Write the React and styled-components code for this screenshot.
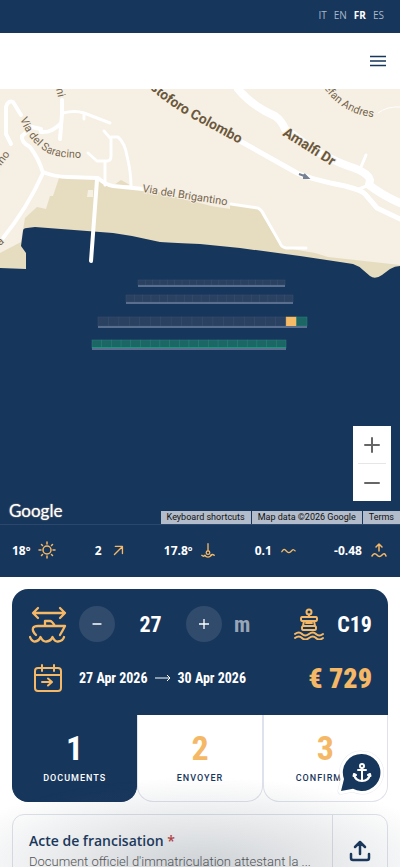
import React, { useState } from 'react';
import styled, { createGlobalStyle, css } from 'styled-components';

const GlobalStyle = createGlobalStyle`
  :root {
    --navy: #17365c;
    --sand: #f4b866;
    --line: #dfe2ea;
    --text: "Open Sans", "Noto Sans", sans-serif;
    --narrow: "Liberation Sans Narrow", "Roboto Condensed", "Liberation Sans", sans-serif;
  }
  * { box-sizing: border-box; }
  body {
    margin: 0;
    background: #fff;
    color: var(--navy);
    font-family: var(--text);
  }
  button { font: inherit; color: inherit; border: 0; padding: 0; cursor: pointer; }
`;

const piers = [
  { x: 138, y: 191, width: 147, height: 7, cells: 20 },
  { x: 126, y: 206, width: 167, height: 9, cells: 20 },
  { x: 98, y: 228, width: 209, height: 11, cells: 20, selected: 18, free: 19 },
  { x: 92, y: 251, width: 194, height: 10, cells: 20, allFree: true },
];

function Pier({ x, y, width, height, cells, selected, free, allFree }) {
  const step = width / cells;
  const fill = (i) => {
    if (i === selected) return '#f5bb66';
    if (allFree || i === free) return '#1c6666';
    return '#2a4162';
  };
  const edge = (i) => {
    if (i === selected) return '#f5bb66';
    if (allFree || i === free) return '#2a8577';
    return '#3a506e';
  };
  return (
    <g>
      {Array.from({ length: cells }, (_, i) => (
        <rect
          key={i}
          x={x + i * step}
          y={y}
          width={step}
          height={height - 2}
          fill={fill(i)}
          stroke={edge(i)}
          strokeWidth="0.5"
        />
      ))}
      <rect x={x} y={y + height - 2} width={width} height="2" fill="#5a6f90" />
      {allFree && <rect x={x} y={y + height - 3} width={width} height="1" fill="#1f947c" />}
    </g>
  );
}

function PortMap() {
  return (
    <MapSvg viewBox="0 0 400 435" preserveAspectRatio="xMidYMin slice" role="img" aria-label="Marina map">
      <defs>
        <path id="saracino" d="M20 30 C26 45 35 57 48 64 C58 69 72 69 104 69" />
        <path id="colombo" d="M147 -3 C161 10 175 20 195 31 L260 66" />
        <path id="andres" d="M324 -1 C333 12 345 21 361 26 L400 33" />
      </defs>
      <rect width="400" height="435" fill="#f5efe4" />
      <path
        fill="#e6dcc0"
        d="M0 164 L21 153 25 129 37 118 46 120 50 107 53 107 59 89 97 90 107 97 143 99 211 117 230 114 257 118 282 158 303 162 315 164 328 168 400 176 V210 H0Z"
      />
      <path fill="#e6dcc0" d="M114 96 L121 91 130 96Z" />
      <path fill="#f5efe4" d="M88 101 h5 v7 h-6Z M211 114 h19 v6 l-19 -3Z" />
      <path
        fill="#17365c"
        d="M0 179 L26 180 V164 L21 157 23 142 Q23 139 27 139 L35 138 113 144 132 147 160 153 Q175 154 200 155 L240 159 300 167 340 173 353 175 Q359 177 363 181 L370 187 Q375 191 382 186 L390 180 Q395 177 400 177 V435 H0Z"
      />
      <g fill="none" stroke="#fff" strokeWidth="4" strokeLinecap="round" strokeLinejoin="round">
        <path d="M11 55 L6 45 V18 Q8 11 13 13 L21 26" />
        <path d="M62 11 V25 L60 50 M61 34 Q52 44 41 43 L41 40 32 38 22 47 Q21 53 30 58 Q39 70 43 84 Q35 102 25 118 T3 149" />
        <path d="M43 83 Q55 88 68 88 L98 89 Q106 96 113 97 L143 100" />
        <path d="M97 91 L91 172" />
        <path d="M105 96 V73 M88 64 L97 72 H107 Q111 72 111 67 V50 L104 42" strokeWidth="3" />
        <path d="M111 48 H118 Q125 54 127 67 Q131 83 131 97" strokeWidth="3" />
        <path d="M63 24 Q75 21 84 24 L110 34 M84 24 V30" strokeWidth="3" />
        <path d="M231 115 L258 119 Q262 121 264 126 L280 154 Q281 158 286 159 L306 159" strokeWidth="3" />
        <path d="M240 52 L297 84 Q310 90 345 97 Q361 101 365 105 L377 119 400 130" strokeWidth="5" />
        <path d="M238 0 Q252 17 275 27 Q282 32 285 40 L312 60 Q340 75 354 79 Q368 84 370 91 L369 96 Q382 106 400 114" strokeWidth="8" />
        <path d="M366 66 L361 78 M359 100 L369 96" strokeWidth="3" />
        <path d="M378 24 Q387 17 400 18" strokeWidth="1" />
      </g>
      <path d="M299 85 L307 88 M304 85 l4 4 l-5 0" fill="#758293" stroke="#758293" strokeWidth="2" />
      <MapLabel><textPath href="#saracino">Via del Saracino</textPath></MapLabel>
      <MapLabel $bold><textPath href="#colombo">istoforo Colombo</textPath></MapLabel>
      <MapLabel><textPath href="#andres">efan Andres</textPath></MapLabel>
      <MapLabel transform="translate(142 103) rotate(9)">Via del Brigantino</MapLabel>
      <MapLabel $bold transform="translate(282 46) rotate(32)">Amalfi Dr</MapLabel>
      <MapLabel transform="translate(-3 82) rotate(-52)">pino</MapLabel>
      <MapLabel transform="translate(56 0) rotate(76)">ni</MapLabel>
      <MapLabel transform="translate(0 157) rotate(-40)">a</MapLabel>
      {piers.map((p) => <Pier key={p.y} {...p} />)}
    </MapSvg>
  );
}

const Icon = ({ size = 20, box = 24, width = 1.5, children }) => (
  <Drawing width={size} height={size} viewBox={`0 0 ${box} ${box}`} strokeWidth={width} aria-hidden="true">
    {children}
  </Drawing>
);

const weather = [
  { value: '18º', label: 'Air', icon: <><circle cx="9" cy="9" r="4" /><path d="M9 1v2M9 15v2M1 9h2M15 9h2M3.5 3.5l1 1M13.5 13.5l1 1M3.5 14.5l1-1M13.5 4.5l1-1" /></> },
  { value: '2', label: 'Vent', icon: <path d="M5 14 L14 5 M6 5 H14 V13" />, size: 16 },
  { value: '17.8º', label: 'Eau', icon: <><path d="M9 2v8M2 15q2 2 4 0M12 15q2-2 4 0M5 15q4 4 8 0" /><circle cx="9" cy="12" r="2" /></>, size: 16 },
  { value: '0.1', label: 'Vagues', icon: <path d="M2 11q2-4 4-2l2 2q2 2 4 0l2-2q1-1 3 1" />, size: 16 },
  { value: '-0.48', label: 'Marée', icon: <><path d="M9 10V3M6 6l3-3 3 3M2 15q2.500-4 5-1t5 0 4 1" /></>, size: 18 },
];

const steps = [
  { id: 1, label: 'DOCUMENTS' },
  { id: 2, label: 'ENVOYER' },
  { id: 3, label: 'CONFIRMER' },
];

export default function App() {
  const [length, setLength] = useState(27);
  const [step, setStep] = useState(1);

  return (
    <>
      <GlobalStyle />
      <TopBar>
        {['IT', 'EN', 'FR', 'ES'].map((lang) => (
          <LangLink key={lang} href={`#${lang.toLowerCase()}`} $active={lang === 'FR'}>{lang}</LangLink>
        ))}
      </TopBar>
      <Header>
        <MenuButton aria-label="Menu">
          <svg width="16" height="12" viewBox="0 0 16 12" stroke="#17365c" strokeWidth="1.7" aria-hidden="true">
            <path d="M0 1.500h16M0 6h16M0 10.500h16" />
          </svg>
        </MenuButton>
      </Header>
      <main>
        <MapArea>
          <PortMap />
          <ZoomControl>
            <ZoomButton aria-label="Zoom in"><Icon size={16} box={16} width={2}><path d="M8 1v14M1 8h14" /></Icon></ZoomButton>
            <ZoomButton aria-label="Zoom out"><Icon size={16} box={16} width={2}><path d="M1 8h14" /></Icon></ZoomButton>
          </ZoomControl>
          <GoogleMark>Google</GoogleMark>
          <Credits>
            <CreditButton>Keyboard shortcuts</CreditButton>
            <Credit>Map data ©2026 Google</Credit>
            <Credit as="a" href="#terms">Terms</Credit>
          </Credits>
        </MapArea>
        <Weather>
          {weather.map((w) => (
            <WeatherItem key={w.label} title={w.label}>
              {w.value}
              <Icon size={w.size || 18} box={18}>{w.icon}</Icon>
            </WeatherItem>
          ))}
        </Weather>

        <Booking>
          <Summary>
            <SummaryRow>
              <IconCell>
                <Icon size={38} box={38} width={2.3}>
                  <path d="M5 8h31M9 3L4 8l5 5M31 3l5 5-5 5" />
                  <path d="M7 30Q3 26 4 23Q5 21 9 21H36Q34 25 31 30M16 21V16H21Q23 16 26 21" />
                  <path d="M1 32Q3 37 6 36.500Q10 36 11.500 32Q14 37 17.500 36.500Q22 36 23.500 32Q26 37 29 36.500Q34 36 35 32" />
                </Icon>
              </IconCell>
              <Stepper>
                <RoundButton aria-label="Moins" onClick={() => setLength(length - 1)}>
                  <Icon size={10} box={10} width={1.3}><path d="M1 5h8" /></Icon>
                </RoundButton>
                <Amount>{length}</Amount>
                <RoundButton aria-label="Plus" onClick={() => setLength(length + 1)}>
                  <Icon size={10} box={10} width={1.3}><path d="M5 0v10M0 5h10" /></Icon>
                </RoundButton>
                <Unit>m</Unit>
              </Stepper>
              <Berth>
                <Icon size={32} box={32} width={2}>
                  <circle cx="16" cy="4" r="2.5" />
                  <path d="M16 6.500V9M9 9H23Q24 9 24 11T23 13H9Q8 13 8 11T9 9ZM11 13L10 18M21 13L22 18M13 15h6M10 18H22Q23 18 23 20T22 22H10Q9 22 9 20T10 18Z" />
                  <path d="M2 26q4-3 7 0t7 0 7 0 7 0M2 30q4-3 7 0t7 0 7 0 7 0" />
                </Icon>
                C19
              </Berth>
            </SummaryRow>
            <SummaryRow>
              <IconCell>
                <Icon size={28} box={28} width={2}>
                  <rect x="1" y="4" width="26" height="23" rx="3" />
                  <path d="M1 11H27M8 1V7M20 1V7M8 18H17M14 14.500l4 3.500-4 3.500" />
                </Icon>
              </IconCell>
              <Dates>
                <time dateTime="2026-04-27">27 Apr 2026</time>
                <svg width="16" height="8" viewBox="0 0 16 8" fill="none" stroke="#fff" aria-hidden="true">
                  <path d="M0 4h15M12 1l3 3-3 3" />
                </svg>
                <time dateTime="2026-04-30">30 Apr 2026</time>
              </Dates>
              <Price>€ 729</Price>
            </SummaryRow>
          </Summary>
          <Steps>
            {steps.map((s) => (
              <StepButton key={s.id} $active={s.id === step} onClick={() => setStep(s.id)}>
                <StepNumber>{s.id}</StepNumber>
                <StepLabel>{s.label}</StepLabel>
              </StepButton>
            ))}
          </Steps>
        </Booking>

        <DocCard>
          <DocText>
            <DocTitle>Acte de francisation <Required>*</Required></DocTitle>
            <DocHint>Document officiel d'immatriculation attestant la ...</DocHint>
          </DocText>
          <UploadButton aria-label="Téléverser">
            <Icon size={22} box={22} width={2.5}>
              <path d="M11 14V2M6 7l5-5 5 5M2 14v4q0 2 2 2h14q2 0 2-2v-4" />
            </Icon>
          </UploadButton>
        </DocCard>
      </main>
      <Shade />
      <ChatButton aria-label="Contact">
        <svg width="48" height="46" viewBox="0 0 48 46" aria-hidden="true">
          <path
            d="M26 4a18.500 18.500 0 1 1-9 34.700L5 41l3-12A18.500 18.500 0 0 1 26 4Z"
            fill="#17365c" stroke="#e8eaf0" strokeWidth="7" strokeLinejoin="round" paintOrder="stroke"
          />
          <path
            d="M26 4a18.500 18.500 0 1 1-9 34.700L5 41l3-12A18.500 18.500 0 0 1 26 4Z"
            fill="#17365c" stroke="#fff" strokeWidth="6" strokeLinejoin="round" paintOrder="stroke"
          />
          <g fill="none" stroke="#fff" strokeWidth="2" strokeLinecap="round" strokeLinejoin="round">
            <circle cx="26" cy="16" r="2" />
            <path d="M26 18V31M22 20H30M18 24Q19 31 26 31T34 24M18 24l-.5 2M18 24l2 1M34 24l.5 2M34 24l-2 1" />
          </g>
        </svg>
      </ChatButton>
    </>
  );
}

const TopBar = styled.nav`
  display: flex;
  justify-content: flex-end;
  align-items: center;
  gap: 7px;
  height: 33px;
  padding: 0 16px 3px;
  background: var(--navy);
`;

const LangLink = styled.a`
  color: ${(p) => (p.$active ? '#fff' : '#a9b6c8')};
  font-size: 10px;
  font-weight: ${(p) => (p.$active ? 700 : 400)};
  text-decoration: none;
`;

const Header = styled.header`
  display: flex;
  justify-content: flex-end;
  align-items: center;
  height: 56px;
  padding: 0 14px;
  background: #fff;
`;

const MenuButton = styled.button`
  display: flex;
  background: none;
`;

const MapArea = styled.section`
  position: relative;
  height: 435px;
  background: var(--navy);
  font-family: Roboto, sans-serif;
  overflow: hidden;
`;

const MapSvg = styled.svg`
  display: block;
  width: 100%;
  height: 100%;
`;

const MapLabel = styled.text`
  fill: ${(p) => (p.$bold ? '#6b583c' : '#77664d')};
  stroke: #f5efe4;
  stroke-width: 2px;
  paint-order: stroke;
  font-size: ${(p) => (p.$bold ? 14 : 11)}px;
  font-weight: ${(p) => (p.$bold ? 700 : 400)};
`;

const ZoomControl = styled.div`
  position: absolute;
  right: 9px;
  bottom: 23px;
  width: 38px;
  padding: 0 5px;
  background: #fff;
`;

const ZoomButton = styled.button`
  display: flex;
  align-items: center;
  justify-content: center;
  width: 100%;
  height: 37px;
  background: none;
  color: #666;
  & + & {
    height: 38px;
    border-top: 1px solid #e6e6e6;
  }
`;

const GoogleMark = styled.span`
  position: absolute;
  left: 9px;
  bottom: 2px;
  color: #fff;
  font-family: Lato, sans-serif;
  font-size: 17px;
  line-height: 22px;
  text-shadow: 0 0 2px #555, 0 0 1px #fff;
`;

const Credits = styled.div`
  position: absolute;
  right: 0;
  bottom: 0;
  display: flex;
  gap: 1px;
`;

const creditStyle = css`
  padding: 0 6px;
  height: 13px;
  background: #b3bccb;
  color: #111;
  font-size: 9px;
  line-height: 13px;
  text-decoration: none;
  white-space: nowrap;
`;

const Credit = styled.span`
  ${creditStyle}
`;

const CreditButton = styled.button`
  ${creditStyle}
`;

const Drawing = styled.svg`
  flex: none;
  fill: none;
  stroke: currentColor;
  stroke-linecap: round;
  stroke-linejoin: round;
`;

const Weather = styled.ul`
  display: flex;
  justify-content: space-between;
  align-items: center;
  height: 53px;
  margin: 0;
  padding: 0 12px 2px;
  border-top: 1px solid #2b486c;
  background: var(--navy);
  list-style: none;
`;

const WeatherItem = styled.li`
  display: flex;
  align-items: center;
  gap: 8px;
  color: #fff;
  font-size: 12px;
  font-weight: 700;
  svg { color: var(--sand); }
`;

const Booking = styled.section`
  margin: 12px 12px 0;
`;

const Summary = styled.div`
  display: flex;
  flex-direction: column;
  gap: 16px;
  padding: 16px 16px 18px;
  border-radius: 16px 16px 0 0;
  background: var(--navy);
  color: #fff;
  font-family: var(--narrow);
  font-weight: 700;
`;

const SummaryRow = styled.div`
  display: flex;
  align-items: center;
  gap: 12px;
  height: 38px;
`;

const IconCell = styled.span`
  display: flex;
  justify-content: center;
  width: 39px;
  color: var(--sand);
`;

const Stepper = styled.div`
  display: flex;
  align-items: center;
`;

const RoundButton = styled.button`
  display: flex;
  align-items: center;
  justify-content: center;
  width: 36px;
  height: 36px;
  border-radius: 50%;
  background: #314b6d;
`;

const Amount = styled.output`
  width: 71px;
  font-size: 22px;
  text-align: center;
`;

const Unit = styled.span`
  margin-left: 12px;
  color: #97a5b7;
  font-size: 22px;
`;

const Berth = styled.div`
  display: flex;
  align-items: center;
  gap: 12px;
  margin-left: auto;
  font-size: 22px;
  svg { color: var(--sand); }
`;

const Dates = styled.div`
  display: flex;
  align-items: center;
  gap: 7px;
  font-size: 14px;
`;

const Price = styled.strong`
  margin-left: auto;
  color: var(--sand);
  font-size: 28px;
`;

const Steps = styled.div`
  display: grid;
  grid-template-columns: repeat(3, 1fr);
`;

const StepButton = styled.button`
  display: flex;
  flex-direction: column;
  align-items: center;
  gap: 4px;
  height: 87px;
  padding-top: 14px;
  overflow: hidden;
  border: 1px solid ${(p) => (p.$active ? 'var(--navy)' : 'var(--line)')};
  border-top: 0;
  border-radius: 0 0 16px 16px;
  background: ${(p) => (p.$active ? 'var(--navy)' : '#fff')};
  color: ${(p) => (p.$active ? '#fff' : 'var(--sand)')};
  & > span + span { color: ${(p) => (p.$active ? '#fff' : 'var(--navy)')}; }
`;

const StepNumber = styled.span`
  font-family: var(--narrow);
  font-size: 34px;
  font-weight: 700;
  line-height: 38px;
`;

const StepLabel = styled.span`
  font-family: Roboto, sans-serif;
  font-size: 9px;
  font-weight: 500;
  letter-spacing: 1px;
  line-height: 14px;
`;

const DocCard = styled.article`
  display: flex;
  margin: 12px 12px 0;
  border: 1px solid var(--line);
  border-radius: 12px;
`;

const DocText = styled.div`
  flex: 1;
  min-width: 0;
  padding: 15px 16px;
`;

const DocTitle = styled.h2`
  margin: 0;
  font-size: 14px;
  font-weight: 600;
  line-height: 22px;
`;

const Required = styled.span`
  color: #c8403c;
`;

const DocHint = styled.p`
  margin: 0;
  color: #555;
  font-family: Roboto, sans-serif;
  font-size: 13px;
  font-weight: 300;
  line-height: 20px;
  white-space: nowrap;
`;

const UploadButton = styled.button`
  display: flex;
  align-items: center;
  justify-content: center;
  width: 55px;
  border-left: 1px solid var(--line);
  background: none;
`;

const Shade = styled.div`
  position: fixed;
  right: 0;
  bottom: 0;
  left: 0;
  height: 90px;
  background: radial-gradient(ellipse 65% 100% at 50% 100%, rgba(60, 75, 90, 0.25), rgba(60, 75, 90, 0));
  pointer-events: none;
`;

const ChatButton = styled.button`
  position: fixed;
  right: 16px;
  bottom: 71px;
  display: flex;
  background: none;
`;
